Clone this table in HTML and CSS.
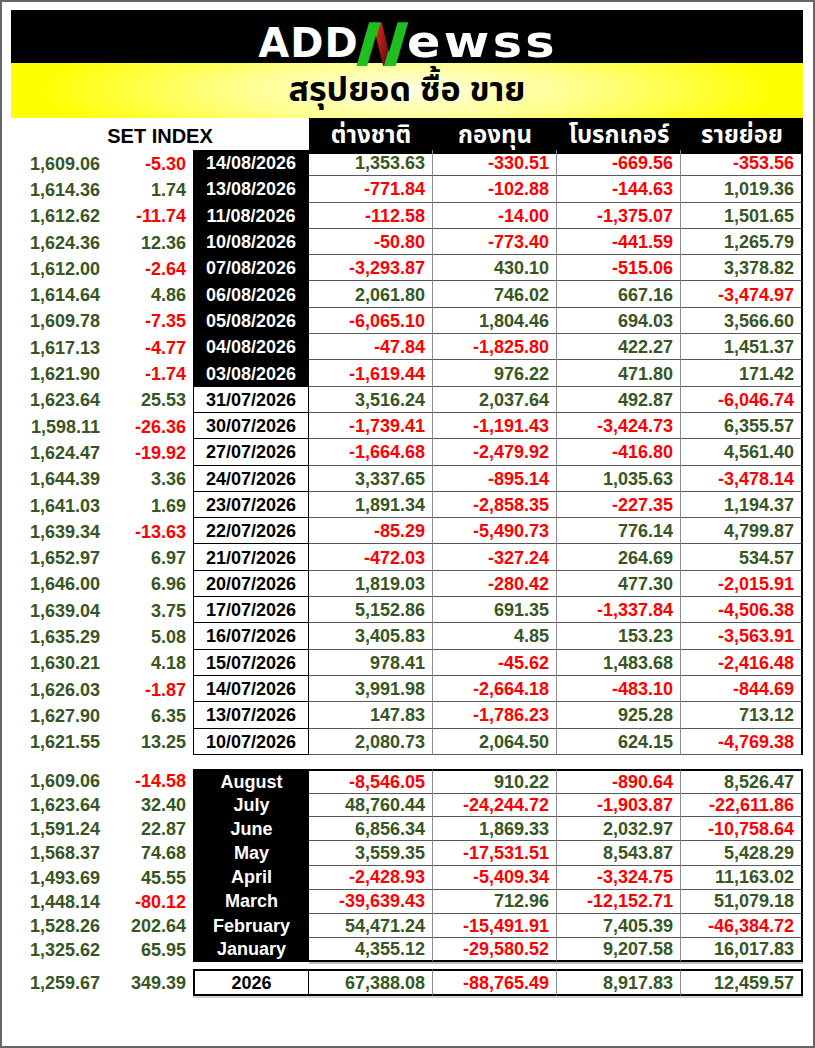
FILE: index.html
```html
<!DOCTYPE html>
<html lang="th">
<head>
<meta charset="utf-8">
<title>ADDNewss - สรุปยอด ซื้อ ขาย</title>
<link rel="stylesheet" href="styles.css">
</head>
<body>
<div class="frame">
  <div class="banner">
    <div class="logo"><span class="add">ADD</span><span class="n">N</span><span class="ewss">ewss</span></div>
  </div>
  <div class="band"><h1 class="title">สรุปยอด ซื้อ ขาย</h1></div>

  <div class="row head">
    <div class="setidx">SET INDEX</div>
    <div class="h">ต่างชาติ</div>
    <div class="h">กองทุน</div>
    <div class="h">โบรกเกอร์</div>
    <div class="h">รายย่อย</div>
  </div>

  <div class="daily">
    <div class="row"><div class="i">1,609.06</div><div class="c r">-5.30</div><div class="d dk">14/08/2026</div><div class="v">1,353.63</div><div class="v r">-330.51</div><div class="v r">-669.56</div><div class="v last r">-353.56</div></div>
    <div class="row"><div class="i">1,614.36</div><div class="c">1.74</div><div class="d dk">13/08/2026</div><div class="v r">-771.84</div><div class="v r">-102.88</div><div class="v r">-144.63</div><div class="v last">1,019.36</div></div>
    <div class="row"><div class="i">1,612.62</div><div class="c r">-11.74</div><div class="d dk">11/08/2026</div><div class="v r">-112.58</div><div class="v r">-14.00</div><div class="v r">-1,375.07</div><div class="v last">1,501.65</div></div>
    <div class="row"><div class="i">1,624.36</div><div class="c">12.36</div><div class="d dk">10/08/2026</div><div class="v r">-50.80</div><div class="v r">-773.40</div><div class="v r">-441.59</div><div class="v last">1,265.79</div></div>
    <div class="row"><div class="i">1,612.00</div><div class="c r">-2.64</div><div class="d dk">07/08/2026</div><div class="v r">-3,293.87</div><div class="v">430.10</div><div class="v r">-515.06</div><div class="v last">3,378.82</div></div>
    <div class="row"><div class="i">1,614.64</div><div class="c">4.86</div><div class="d dk">06/08/2026</div><div class="v">2,061.80</div><div class="v">746.02</div><div class="v">667.16</div><div class="v last r">-3,474.97</div></div>
    <div class="row"><div class="i">1,609.78</div><div class="c r">-7.35</div><div class="d dk">05/08/2026</div><div class="v r">-6,065.10</div><div class="v">1,804.46</div><div class="v">694.03</div><div class="v last">3,566.60</div></div>
    <div class="row"><div class="i">1,617.13</div><div class="c r">-4.77</div><div class="d dk">04/08/2026</div><div class="v r">-47.84</div><div class="v r">-1,825.80</div><div class="v">422.27</div><div class="v last">1,451.37</div></div>
    <div class="row"><div class="i">1,621.90</div><div class="c r">-1.74</div><div class="d dk">03/08/2026</div><div class="v r">-1,619.44</div><div class="v">976.22</div><div class="v">471.80</div><div class="v last">171.42</div></div>
    <div class="row"><div class="i">1,623.64</div><div class="c">25.53</div><div class="d">31/07/2026</div><div class="v">3,516.24</div><div class="v">2,037.64</div><div class="v">492.87</div><div class="v last r">-6,046.74</div></div>
    <div class="row"><div class="i">1,598.11</div><div class="c r">-26.36</div><div class="d">30/07/2026</div><div class="v r">-1,739.41</div><div class="v r">-1,191.43</div><div class="v r">-3,424.73</div><div class="v last">6,355.57</div></div>
    <div class="row"><div class="i">1,624.47</div><div class="c r">-19.92</div><div class="d">27/07/2026</div><div class="v r">-1,664.68</div><div class="v r">-2,479.92</div><div class="v r">-416.80</div><div class="v last">4,561.40</div></div>
    <div class="row"><div class="i">1,644.39</div><div class="c">3.36</div><div class="d">24/07/2026</div><div class="v">3,337.65</div><div class="v r">-895.14</div><div class="v">1,035.63</div><div class="v last r">-3,478.14</div></div>
    <div class="row"><div class="i">1,641.03</div><div class="c">1.69</div><div class="d">23/07/2026</div><div class="v">1,891.34</div><div class="v r">-2,858.35</div><div class="v r">-227.35</div><div class="v last">1,194.37</div></div>
    <div class="row"><div class="i">1,639.34</div><div class="c r">-13.63</div><div class="d">22/07/2026</div><div class="v r">-85.29</div><div class="v r">-5,490.73</div><div class="v">776.14</div><div class="v last">4,799.87</div></div>
    <div class="row"><div class="i">1,652.97</div><div class="c">6.97</div><div class="d">21/07/2026</div><div class="v r">-472.03</div><div class="v r">-327.24</div><div class="v">264.69</div><div class="v last">534.57</div></div>
    <div class="row"><div class="i">1,646.00</div><div class="c">6.96</div><div class="d">20/07/2026</div><div class="v">1,819.03</div><div class="v r">-280.42</div><div class="v">477.30</div><div class="v last r">-2,015.91</div></div>
    <div class="row"><div class="i">1,639.04</div><div class="c">3.75</div><div class="d">17/07/2026</div><div class="v">5,152.86</div><div class="v">691.35</div><div class="v r">-1,337.84</div><div class="v last r">-4,506.38</div></div>
    <div class="row"><div class="i">1,635.29</div><div class="c">5.08</div><div class="d">16/07/2026</div><div class="v">3,405.83</div><div class="v">4.85</div><div class="v">153.23</div><div class="v last r">-3,563.91</div></div>
    <div class="row"><div class="i">1,630.21</div><div class="c">4.18</div><div class="d">15/07/2026</div><div class="v">978.41</div><div class="v r">-45.62</div><div class="v">1,483.68</div><div class="v last r">-2,416.48</div></div>
    <div class="row"><div class="i">1,626.03</div><div class="c r">-1.87</div><div class="d">14/07/2026</div><div class="v">3,991.98</div><div class="v r">-2,664.18</div><div class="v r">-483.10</div><div class="v last r">-844.69</div></div>
    <div class="row"><div class="i">1,627.90</div><div class="c">6.35</div><div class="d">13/07/2026</div><div class="v">147.83</div><div class="v r">-1,786.23</div><div class="v">925.28</div><div class="v last">713.12</div></div>
    <div class="row"><div class="i">1,621.55</div><div class="c">13.25</div><div class="d">10/07/2026</div><div class="v">2,080.73</div><div class="v">2,064.50</div><div class="v">624.15</div><div class="v last r">-4,769.38</div></div>
  </div>

  <div class="months">
    <div class="row"><div class="i">1,609.06</div><div class="c r">-14.58</div><div class="d dk">August</div><div class="v r">-8,546.05</div><div class="v">910.22</div><div class="v r">-890.64</div><div class="v last">8,526.47</div></div>
    <div class="row"><div class="i">1,623.64</div><div class="c">32.40</div><div class="d dk">July</div><div class="v">48,760.44</div><div class="v r">-24,244.72</div><div class="v r">-1,903.87</div><div class="v last r">-22,611.86</div></div>
    <div class="row"><div class="i">1,591.24</div><div class="c">22.87</div><div class="d dk">June</div><div class="v">6,856.34</div><div class="v">1,869.33</div><div class="v">2,032.97</div><div class="v last r">-10,758.64</div></div>
    <div class="row"><div class="i">1,568.37</div><div class="c">74.68</div><div class="d dk">May</div><div class="v">3,559.35</div><div class="v r">-17,531.51</div><div class="v">8,543.87</div><div class="v last">5,428.29</div></div>
    <div class="row"><div class="i">1,493.69</div><div class="c">45.55</div><div class="d dk">April</div><div class="v r">-2,428.93</div><div class="v r">-5,409.34</div><div class="v r">-3,324.75</div><div class="v last">11,163.02</div></div>
    <div class="row"><div class="i">1,448.14</div><div class="c r">-80.12</div><div class="d dk">March</div><div class="v r">-39,639.43</div><div class="v">712.96</div><div class="v r">-12,152.71</div><div class="v last">51,079.18</div></div>
    <div class="row"><div class="i">1,528.26</div><div class="c">202.64</div><div class="d dk">February</div><div class="v">54,471.24</div><div class="v r">-15,491.91</div><div class="v">7,405.39</div><div class="v last r">-46,384.72</div></div>
    <div class="row"><div class="i">1,325.62</div><div class="c">65.95</div><div class="d dk">January</div><div class="v">4,355.12</div><div class="v r">-29,580.52</div><div class="v">9,207.58</div><div class="v last">16,017.83</div></div>
  </div>

  <div class="total">
    <div class="row"><div class="i">1,259.67</div><div class="c">349.39</div><div class="d">2026</div><div class="v">67,388.08</div><div class="v r">-88,765.49</div><div class="v">8,917.83</div><div class="v last">12,459.57</div></div>
  </div>
</div>
</body>
</html>
```

FILE: styles.css
```css
* { box-sizing: border-box; }

html, body {
  margin: 0;
  padding: 0;
  background: #ffffff;
}

body {
  font-family: "Liberation Sans", Arial, sans-serif;
  font-weight: 700;
  font-size: 18px;
  color: #375623;
}

.frame {
  width: 815px;
  height: 1048px;
  border: 2px solid #666666;
  padding: 8px 10px 0 9px;
  overflow: hidden;
}

/* ---------- banner / logo ---------- */
.banner {
  height: 53px;
  background: #000000;
  display: flex;
  align-items: center;
  justify-content: center;
}

.logo {
  display: flex;
  align-items: baseline;
  color: #ffffff;
  font-family: "DejaVu Sans", sans-serif;
  font-weight: 700;
  line-height: 1;
  margin-top: -2px;
  padding-right: 14px;
}

.add {
  font-size: 40px;
  letter-spacing: 1px;
}

.n {
  font-size: 60px;
  display: inline-block;
  transform: translateY(9px) skewX(-16deg);
  margin: 0 0 0 -2px;
  background: linear-gradient(90deg, #1fbf1f 0%, #1fbf1f 34%, #d42020 34%, #6b1010 66%, #1fbf1f 66%, #1fbf1f 100%);
  -webkit-background-clip: text;
  background-clip: text;
  color: transparent;
}

.ewss {
  font-size: 44px;
  letter-spacing: 3px;
  display: inline-block;
  transform: scaleX(1.12);
  transform-origin: left center;
}

/* ---------- yellow band ---------- */
.band {
  height: 55px;
  background: radial-gradient(ellipse 55% 140% at 50% 50%, #ffffe6 0%, #ffff8c 40%, #ffff00 85%);
  display: flex;
  align-items: center;
  justify-content: center;
}

.title {
  margin: 0;
  font-family: "Noto Sans Thai", "Leelawadee UI", Tahoma, "Noto Sans", sans-serif;
  font-size: 34px;
  font-weight: 700;
  color: #000000;
  line-height: 1;
}

/* ---------- grid rows ---------- */
.row {
  display: grid;
  grid-template-columns: 89px 93px 116px 124px 124px 124px 122px;
  height: 26.3px;
}

.row > div {
  display: flex;
  align-items: center;
  white-space: nowrap;
  padding-top: 2px;
}

.head {
  height: 32px;
}

.head > div {
  padding-top: 0;
}

.setidx {
  grid-column: 1 / 4;
  justify-content: center;
  color: #000000;
  font-size: 20px;
}

.h {
  background: #000000;
  color: #ffffff;
  justify-content: center;
  font-family: "Noto Sans Thai", "Leelawadee UI", Tahoma, "Noto Sans", sans-serif;
  font-size: 24px;
  font-weight: 700;
}

.i {
  justify-content: flex-end;
}

.c {
  justify-content: flex-end;
  padding-right: 7px;
}

.d {
  justify-content: center;
  color: #000000;
  background: #ffffff;
  border-left: 1px solid #000000;
  border-right: 1px solid #000000;
  border-bottom: 1px solid #000000;
}

.d.dk {
  background: #000000;
  color: #ffffff;
  border-color: #000000;
}

.v {
  justify-content: flex-end;
  padding-right: 7px;
  border-right: 1px solid #8c8c8c;
  border-bottom: 1px solid #595959;
}

.v.last {
  border-right: 2px solid #000000;
}

.r {
  color: #ff0000;
}

/* ---------- monthly block ---------- */
.months {
  margin-top: 14px;
}

.months .row {
  height: 24.2px;
}

.months .row > div {
  padding-top: 1px;
}

.months .d {
  border-left: 2px solid #000000;
}

.months .row:first-child .d,
.months .row:first-child .v {
  border-top: 2px solid #000000;
}

.months .row:last-child .d,
.months .row:last-child .v {
  border-bottom: 2px solid #000000;
}

.months .row:last-child .v {
  box-shadow: 0 2px 0 #bdbdbd;
}

/* ---------- yearly total ---------- */
.total {
  margin-top: 7px;
}

.total .row {
  height: 27px;
}

.total .d,
.total .v {
  border-top: 2px solid #000000;
  border-bottom: 2px solid #000000;
  box-shadow: 0 2px 0 #d0d0d0;
}

.total .d {
  border-left: 2px solid #000000;
}
```
